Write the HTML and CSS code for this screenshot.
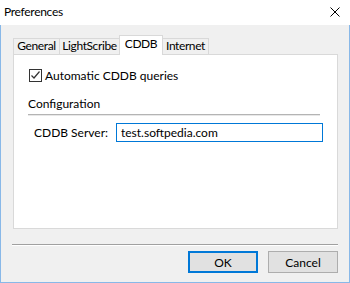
FILE: index.html
```html
<!DOCTYPE html>
<html lang="en">
<head>
    <meta charset="UTF-8">
    <title>Preferences</title>
    <link rel="stylesheet" href="styles.css">
</head>
<body>
    <div class="window">
        <div class="titlebar">
            <span class="title">Preferences</span>
            <svg class="close" width="10" height="10" viewBox="0 0 10 10">
                <path d="M0.5 0.5 L9.5 9.5 M9.5 0.5 L0.5 9.5" stroke="#000" stroke-width="1"/>
            </svg>
        </div>
        <div class="client">
            <div class="tabs">
                <div class="tab tab-general">General</div>
                <div class="tab tab-light">LightScribe</div>
                <div class="tab tab-cddb selected">CDDB</div>
                <div class="tab tab-internet">Internet</div>
            </div>
            <div class="panel">
                <label class="check-row">
                    <span class="checkbox">
                        <svg width="11" height="11" viewBox="0 0 11 11">
                            <path d="M1.5 5.5 L4 8 L9.5 1.5" fill="none" stroke="#333" stroke-width="1.2"/>
                        </svg>
                    </span>
                    Automatic CDDB queries
                </label>
                <div class="group-title">Configuration</div>
                <div class="group-line"></div>
                <div class="field-row">
                    <span class="field-label">CDDB Server:</span>
                    <div class="field-input">test.softpedia.com</div>
                </div>
            </div>
            <div class="separator"></div>
            <div class="buttons">
                <button class="btn btn-default">OK</button>
                <button class="btn">Cancel</button>
            </div>
        </div>
    </div>
</body>
</html>
```

FILE: styles.css
```css
html, body {
    margin: 0;
    padding: 0;
}

body {
    font-family: Lato, "Noto Sans", sans-serif;
    font-size: 12px;
    color: #000;
    background: #fff;
}

.window {
    width: 350px;
    height: 283px;
    display: flex;
    flex-direction: column;
}

.titlebar {
    height: 25px;
    background: #fff;
    display: flex;
    align-items: center;
    justify-content: space-between;
    padding: 0 10px 0 4px;
}

.title {
    font-size: 12px;
    line-height: 14px;
    letter-spacing: -0.3px;
    margin-top: -1px;
}

.close {
    display: block;
    margin-top: -1px;
}

.client {
    flex: 1;
    background: #f0f0f0;
    border: 1px solid #88b8e8;
    border-top: none;
    padding: 10px 11px 0 11px;
    display: flex;
    flex-direction: column;
}

.tabs {
    display: flex;
    align-items: flex-end;
    height: 19px;
    padding-left: 1px;
}

.tab {
    box-sizing: border-box;
    height: 16px;
    line-height: 14px;
    text-align: center;
    letter-spacing: -0.4px;
    border: 1px solid #d9d9d9;
    border-bottom: none;
    margin-right: -1px;
    background: #f0f0f0;
}

.tab-general { width: 47px; }
.tab-light { width: 61px; }
.tab-cddb { width: 44px; }
.tab-internet { width: 47px; }

.tab.selected {
    height: 20px;
    margin-bottom: -1px;
    line-height: 16px;
    background: #fff;
    position: relative;
    z-index: 1;
}

.panel {
    box-sizing: border-box;
    margin-left: 1px;
    width: 325px;
    height: 175px;
    background: #fff;
    border: 1px solid #d9d9d9;
    padding: 14px 0 0 15px;
}

.check-row {
    display: flex;
    align-items: center;
    height: 13px;
}

.checkbox {
    box-sizing: border-box;
    width: 13px;
    height: 13px;
    border: 1px solid #333;
    margin-right: 3px;
    display: flex;
    align-items: center;
    justify-content: center;
}

.checkbox svg {
    display: block;
}

.group-title {
    margin-top: 14px;
    margin-left: -1px;
    line-height: 16px;
}

.group-line {
    width: 292px;
    margin-left: -1px;
    margin-top: 2px;
    border-top: 1px solid #b4b4b4;
    border-bottom: 1px solid #e8e8e8;
}

.field-row {
    display: flex;
    align-items: center;
    margin-top: 7px;
    margin-left: 5px;
}

.field-label {
    flex-shrink: 0;
    width: 82px;
}

.field-input {
    flex-shrink: 0;
    box-sizing: border-box;
    width: 207px;
    height: 19px;
    border: 1px solid #0078d7;
    padding: 0 4px;
    line-height: 17px;
}

.separator {
    margin-top: 15px;
    width: 326px;
    border-top: 1px solid #a0a0a0;
    border-bottom: 1px solid #fff;
}

.buttons {
    display: flex;
    justify-content: flex-end;
    gap: 10px;
    margin-top: 5px;
    width: 326px;
}

.btn {
    box-sizing: border-box;
    width: 70px;
    height: 22px;
    background: #e1e1e1;
    border: 1px solid #adadad;
    font-family: inherit;
    font-size: 12px;
    color: #000;
    padding: 0;
    margin: 0;
}

.btn-default {
    border: 2px solid #0078d7;
}
```
